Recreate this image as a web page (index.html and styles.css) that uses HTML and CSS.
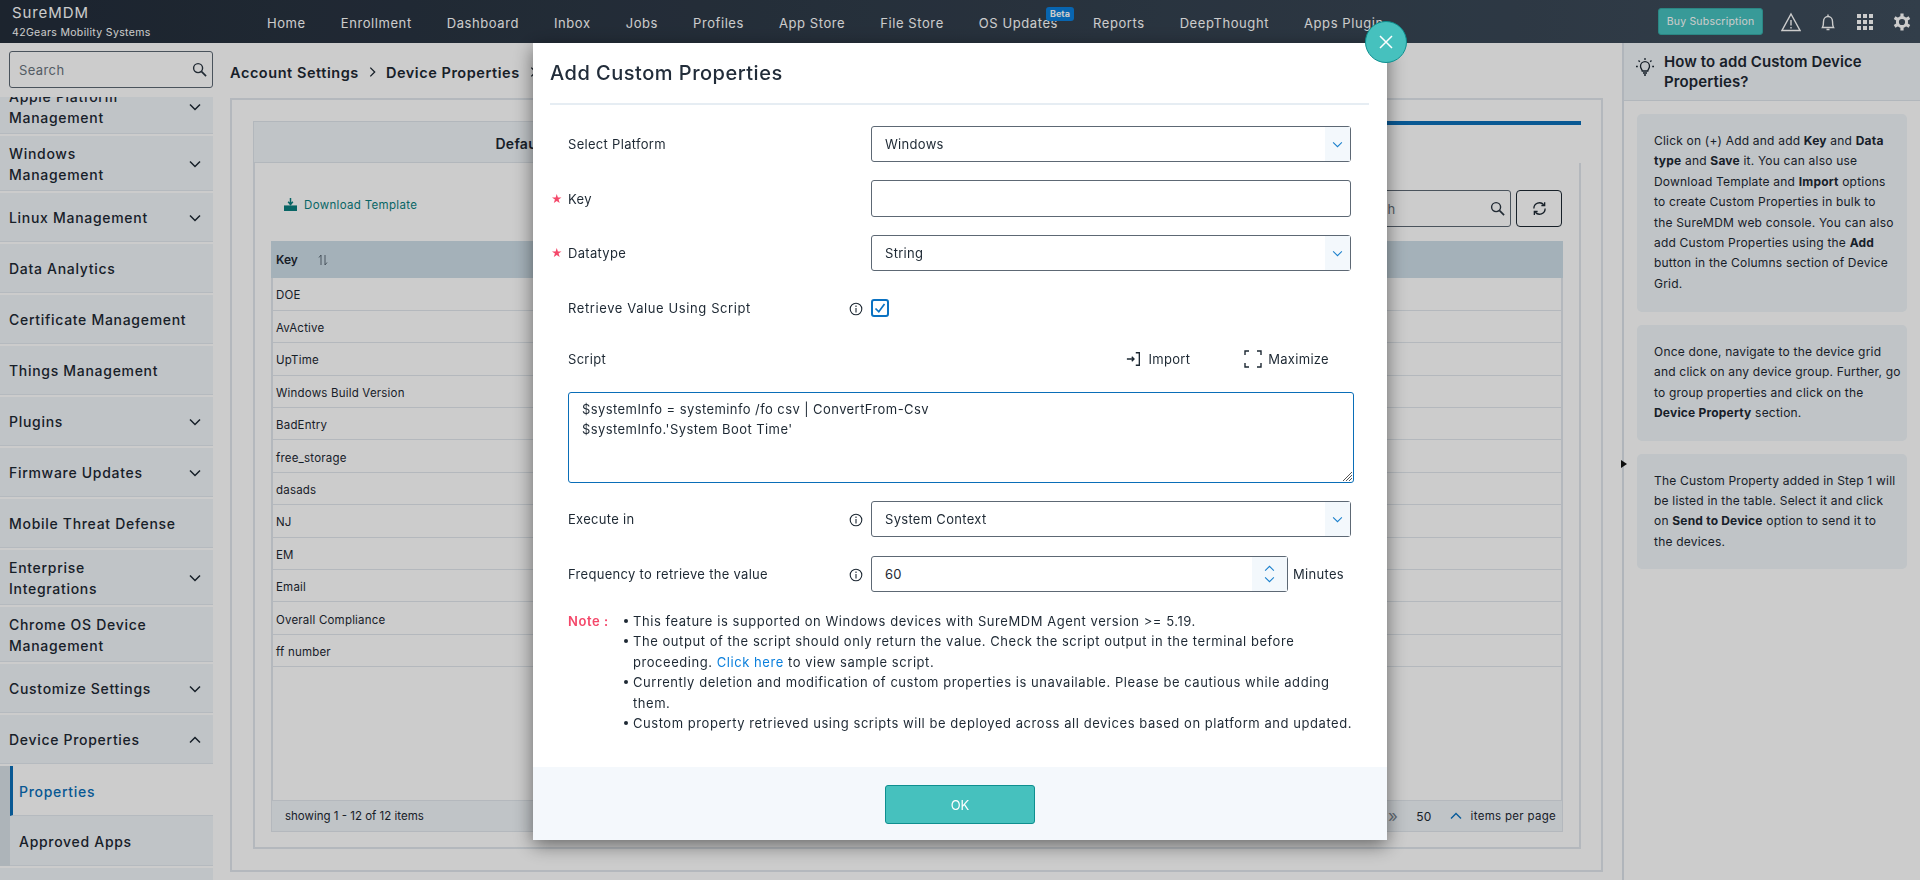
FILE: index.html
```html
<!DOCTYPE html>
<html lang="en">
<head>
    <meta charset="UTF-8">
    <title>SureMDM - Device Properties</title>
    <link rel="stylesheet" href="styles.css">
</head>
<body>
    <header class="topbar">
        <div class="brand">
            <div class="brand-name">SureMDM</div>
            <div class="brand-sub">42Gears Mobility Systems</div>
        </div>
        <nav class="nav">
            <a>Home</a>
            <a>Enrollment</a>
            <a>Dashboard</a>
            <a>Inbox</a>
            <a>Jobs</a>
            <a>Profiles</a>
            <a>App Store</a>
            <a>File Store</a>
            <a class="has-badge">OS Updates<span class="badge">Beta</span></a>
            <a>Reports</a>
            <a>DeepThought</a>
            <a>Apps Plugin</a>
        </nav>
        <div class="top-actions">
            <button class="buy">Buy Subscription</button>
            <svg class="top-icon" viewBox="0 0 20 20"><path d="M10 2 L19 18.5 H1 Z M10 8 V13.5 M10 15 V16.5" fill="none" stroke="#fff" stroke-width="1.4"/></svg>
            <svg class="top-icon" viewBox="0 0 20 20"><path d="M4.5 15.5 C5.5 14 5.5 12 5.5 9.5 C5.5 6.5 7.5 4.5 10 4.5 C12.5 4.5 14.5 6.5 14.5 9.5 C14.5 12 14.5 14 15.5 15.5 Z M10 2.5 V4.5 M8.5 17.5 H11.5" fill="none" stroke="#fff" stroke-width="1.4"/></svg>
            <svg class="top-icon" viewBox="0 0 20 20" fill="#fff"><rect x="2" y="2" width="4" height="4"/><rect x="8" y="2" width="4" height="4"/><rect x="14" y="2" width="4" height="4"/><rect x="2" y="8" width="4" height="4"/><rect x="8" y="8" width="4" height="4"/><rect x="14" y="8" width="4" height="4"/><rect x="2" y="14" width="4" height="4"/><rect x="8" y="14" width="4" height="4"/><rect x="14" y="14" width="4" height="4"/></svg>
            <svg class="top-icon" viewBox="0 0 20 20"><circle cx="10" cy="10" r="4.6" fill="none" stroke="#fff" stroke-width="3"/><path d="M10 1.5 V5 M10 15 V18.5 M2.6 5.7 L5.7 7.5 M14.3 12.5 L17.4 14.3 M2.6 14.3 L5.7 12.5 M14.3 7.5 L17.4 5.7" stroke="#fff" stroke-width="3.2"/></svg>
        </div>
    </header>

    <div class="page">
        <aside class="sidebar">
            <div class="side-search">
                <div class="search-box">
                    <span class="placeholder">Search</span>
                    <svg class="search-icon" viewBox="0 0 16 16"><circle cx="6.5" cy="6.5" r="4.8" fill="none" stroke="#2b3642" stroke-width="1.5"/><path d="M10 10 L15 15" stroke="#2b3642" stroke-width="1.8"/></svg>
                </div>
            </div>
            <div class="menu">
                <div class="menu-item two-line clipped"><span>Apple Platform<br>Management</span><svg class="chev" viewBox="0 0 12 8"><path d="M1 1.5 L6 6.5 L11 1.5"/></svg></div>
                <div class="menu-item two-line"><span>Windows<br>Management</span><svg class="chev" viewBox="0 0 12 8"><path d="M1 1.5 L6 6.5 L11 1.5"/></svg></div>
                <div class="menu-item"><span>Linux Management</span><svg class="chev" viewBox="0 0 12 8"><path d="M1 1.5 L6 6.5 L11 1.5"/></svg></div>
                <div class="menu-item"><span>Data Analytics</span></div>
                <div class="menu-item"><span>Certificate Management</span></div>
                <div class="menu-item"><span>Things Management</span></div>
                <div class="menu-item"><span>Plugins</span><svg class="chev" viewBox="0 0 12 8"><path d="M1 1.5 L6 6.5 L11 1.5"/></svg></div>
                <div class="menu-item"><span>Firmware Updates</span><svg class="chev" viewBox="0 0 12 8"><path d="M1 1.5 L6 6.5 L11 1.5"/></svg></div>
                <div class="menu-item"><span>Mobile Threat Defense</span></div>
                <div class="menu-item two-line"><span>Enterprise<br>Integrations</span><svg class="chev" viewBox="0 0 12 8"><path d="M1 1.5 L6 6.5 L11 1.5"/></svg></div>
                <div class="menu-item two-line"><span>Chrome OS Device<br>Management</span></div>
                <div class="menu-item"><span>Customize Settings</span><svg class="chev" viewBox="0 0 12 8"><path d="M1 1.5 L6 6.5 L11 1.5"/></svg></div>
                <div class="menu-item"><span>Device Properties</span><svg class="chev" viewBox="0 0 12 8"><path d="M1 6.5 L6 1.5 L11 6.5"/></svg></div>
                <div class="submenu">
                    <div class="sub-item active">Properties</div>
                    <div class="sub-item">Approved Apps</div>
                </div>
                <div class="menu-item"></div>
            </div>
        </aside>

        <main class="main">
            <div class="crumbs">
                <span>Account Settings</span>
                <svg class="crumb-sep" viewBox="0 0 8 12"><path d="M1.5 1 L6.5 6 L1.5 11"/></svg>
                <span>Device Properties</span>
                <svg class="crumb-sep" viewBox="0 0 8 12"><path d="M1.5 1 L6.5 6 L1.5 11"/></svg>
            </div>
            <section class="outer">
                <div class="inner">
                    <div class="tabs">
                        <div class="tab">Default Device Properties</div>
                        <div class="tab active">Custom Properties</div>
                    </div>
                    <div class="toolbar">
                        <a class="download">
                            <svg viewBox="0 0 16 14" width="15" height="13"><path d="M8 0 V6 M5.5 4 L8 7 L10.5 4" fill="none" stroke="#0b7f7f" stroke-width="1.6"/><path d="M1 8 H15 V14 H1 Z" fill="#0b7f7f"/></svg>
                            Download Template
                        </a>
                        <div class="tools">
                            <div class="grid-search">
                                <span class="placeholder">Search</span>
                                <svg class="search-icon" viewBox="0 0 16 16"><circle cx="6.5" cy="6.5" r="4.8" fill="none" stroke="#2b3642" stroke-width="1.5"/><path d="M10 10 L15 15" stroke="#2b3642" stroke-width="1.8"/></svg>
                            </div>
                            <button class="refresh"><svg viewBox="0 0 16 16" width="15" height="15"><path d="M2 8 A6 6 0 0 1 12.5 4 M14 8 A6 6 0 0 1 3.5 12" fill="none" stroke="#1d2833" stroke-width="1.4"/><path d="M13.5 1.2 V4.8 H10 M2.5 14.8 V11.2 H6" fill="none" stroke="#1d2833" stroke-width="1.4"/></svg></button>
                        </div>
                    </div>
                    <div class="grid">
                        <table class="grid-table">
                            <thead>
                                <tr><th>Key <svg class="sort" viewBox="0 0 10 12"><path d="M3 11 V1 L1 3.5 M7 1 V11 L9 8.5" fill="none" stroke="#5c6a76" stroke-width="1"/></svg></th></tr>
                            </thead>
                            <tbody>
                                <tr><td>DOE</td></tr>
                                <tr><td>AvActive</td></tr>
                                <tr><td>UpTime</td></tr>
                                <tr><td>Windows Build Version</td></tr>
                                <tr><td>BadEntry</td></tr>
                                <tr><td>free_storage</td></tr>
                                <tr><td>dasads</td></tr>
                                <tr><td>NJ</td></tr>
                                <tr><td>EM</td></tr>
                                <tr><td>Email</td></tr>
                                <tr><td>Overall Compliance</td></tr>
                                <tr><td>ff number</td></tr>
                            </tbody>
                        </table>
                        <div class="grid-fill"></div>
                        <div class="grid-foot">
                            <span>showing 1 - 12 of 12 items</span>
                            <div class="pager">
                                <span class="pg-last">&raquo;</span>
                                <span class="pg-size">50</span>
                                <svg class="pg-up" viewBox="0 0 12 8"><path d="M1 6.5 L6 1.5 L11 6.5"/></svg>
                                <span>items per page</span>
                            </div>
                        </div>
                    </div>
                </div>
            </section>
        </main>

        <aside class="help">
            <div class="help-head">
                <svg class="bulb" viewBox="0 0 20 20"><path d="M7.2 14 C7 12 5.5 11.5 5.5 9.2 A4.5 4.5 0 0 1 14.5 9.2 C14.5 11.5 13 12 12.8 14 Z M8 16 H12 M9 18 H11 M10 1 V3 M3.5 3.5 L4.8 4.8 M16.5 3.5 L15.2 4.8 M1 9.5 H2.8 M17.2 9.5 H19" fill="none" stroke="#1d2833" stroke-width="1.3"/></svg>
                <h2>How to add Custom Device Properties?</h2>
            </div>
            <div class="help-body">
                <div class="help-card h-first">Click on (+) Add and add <b>Key</b> and <b>Data<br>type</b> and <b>Save</b> it. You can also use<br>Download Template and <b>Import</b> options<br>to create Custom Properties in bulk to<br>the SureMDM web console. You can also<br>add Custom Properties using the <b>Add</b><br>button in the Columns section of Device<br>Grid.</div>
                <div class="help-card">Once done, navigate to the device grid<br>and click on any device group. Further, go<br>to group properties and click on the<br><b>Device Property</b> section.</div>
                <div class="help-card">The Custom Property added in Step 1 will<br>be listed in the table. Select it and click<br>on <b>Send to Device</b> option to send it to<br>the devices.</div>
            </div>
            <span class="help-toggle"></span>
        </aside>
    </div>

    <div class="overlay"></div>

    <div class="modal">
        <button class="modal-close"><svg viewBox="0 0 16 16" width="16" height="16"><path d="M2 2 L14 14 M14 2 L2 14" stroke="#fff" stroke-width="1.5"/></svg></button>
        <h1 class="modal-title">Add Custom Properties</h1>
        <div class="modal-body">
            <div class="form-row">
                <label>Select Platform</label>
                <div class="select">Windows<span class="select-btn"><svg class="blue-chev" viewBox="0 0 12 8"><path d="M1 1.5 L6 6.5 L11 1.5"/></svg></span></div>
            </div>
            <div class="form-row key-row">
                <label class="req">Key</label>
                <div class="input"></div>
            </div>
            <div class="form-row">
                <label class="req">Datatype</label>
                <div class="select">String<span class="select-btn"><svg class="blue-chev" viewBox="0 0 12 8"><path d="M1 1.5 L6 6.5 L11 1.5"/></svg></span></div>
            </div>
            <div class="form-row check-row">
                <label>Retrieve Value Using Script<svg class="info" viewBox="0 0 14 14"><circle cx="7" cy="7" r="5.8"/><path d="M7 6 V10.5 M7 3.5 V5"/></svg></label>
                <span class="checkbox"><svg viewBox="0 0 14 14" width="14" height="14"><path d="M2.5 7.5 L5.8 10.8 L11.5 3" fill="none" stroke="#0a72c2" stroke-width="1.7"/></svg></span>
            </div>
            <div class="script-row">
                <span>Script</span>
                <div class="script-actions">
                    <a><svg viewBox="0 0 18 18" width="16" height="18"><path d="M1 9 H9 M6.5 6.5 L9 9 L6.5 11.5 M11 2 H15 V16 H11" fill="none" stroke="#1d2833" stroke-width="1.5"/></svg>Import</a>
                    <a class="maximize"><svg viewBox="0 0 18 18" width="18" height="18"><path d="M1 5 V1 H5 M13 1 H17 V5 M1 13 V17 H5 M13 17 H17 V13" fill="none" stroke="#1d2833" stroke-width="1.4"/></svg>Maximize</a>
                </div>
            </div>
            <div class="script-box">
                <div>$systemInfo = systeminfo /fo csv | ConvertFrom-Csv</div>
                <div>$systemInfo.'System Boot Time'</div>
                <svg class="resize" viewBox="0 0 10 10"><path d="M1 10 L10 1 M4 10 L10 4 M7 10 L10 7" stroke="#555" stroke-width="1"/></svg>
            </div>
            <div class="form-row exec-row">
                <label>Execute in<svg class="info" viewBox="0 0 14 14"><circle cx="7" cy="7" r="5.8"/><path d="M7 6 V10.5 M7 3.5 V5"/></svg></label>
                <div class="select">System Context<span class="select-btn"><svg class="blue-chev" viewBox="0 0 12 8"><path d="M1 1.5 L6 6.5 L11 1.5"/></svg></span></div>
            </div>
            <div class="form-row">
                <label>Frequency to retrieve the value<svg class="info" viewBox="0 0 14 14"><circle cx="7" cy="7" r="5.8"/><path d="M7 6 V10.5 M7 3.5 V5"/></svg></label>
                <div class="freq">
                    <div class="select number">60<span class="select-btn spin"><svg class="blue-chev" viewBox="0 0 12 8"><path d="M1 6.5 L6 1.5 L11 6.5"/></svg><svg class="blue-chev" viewBox="0 0 12 8"><path d="M1 1.5 L6 6.5 L11 1.5"/></svg></span></div>
                    <span class="unit">Minutes</span>
                </div>
            </div>
            <div class="note">
                <strong>Note :</strong>
                <ul>
                    <li>This feature is supported on Windows devices with SureMDM Agent version &gt;= 5.19.</li>
                    <li>The output of the script should only return the value. Check the script output in the terminal before proceeding. <a>Click here</a> to view sample script.</li>
                    <li>Currently deletion and modification of custom properties is unavailable. Please be cautious while adding them.</li>
                    <li>Custom property retrieved using scripts will be deployed across all devices based on platform and updated.</li>
                </ul>
            </div>
        </div>
        <div class="modal-foot">
            <button class="ok">OK</button>
        </div>
    </div>
</body>
</html>
```

FILE: styles.css
```css
* {
    box-sizing: border-box;
}
html, body {
    margin: 0;
    height: 880px;
    overflow: hidden;
}
body {
    font-family: Inter, "Noto Sans", sans-serif;
    font-size: 13px;
    color: #1d2833;
    background-color: #fff;
    display: flex;
    flex-direction: column;
}
button {
    font-family: inherit;
}

/* top bar */
.topbar {
    height: 43px;
    flex: none;
    display: flex;
    background: linear-gradient(90deg, #232d3a, #3f4e5d);
    color: #fff;
}
.brand {
    width: 267px;
    padding: 3px 0 0 12px;
    flex: none;
}
.brand-name {
    font-size: 15px;
    line-height: 19px;
    letter-spacing: .9px;
}
.brand-sub {
    font-size: 10.5px;
    line-height: 16px;
    margin-top: 3px;
    letter-spacing: .35px;
}
.nav {
    display: flex;
    gap: 35px;
    font-size: 13px;
    line-height: 46px;
    letter-spacing: .58px;
    white-space: nowrap;
    flex: 1;
    overflow: hidden;
}
.has-badge {
    position: relative;
}
.badge {
    position: absolute;
    top: 7px;
    right: -16px;
    width: 28px;
    height: 14px;
    text-align: center;
    font-size: 9px;
    line-height: 14px;
    font-weight: 700;
    letter-spacing: 0;
    background-color: #0a7fdc;
    border-radius: 3px;
}
.top-actions {
    width: 262px;
    flex: none;
    display: flex;
    align-items: center;
}
.buy {
    width: 105px;
    height: 27px;
    flex: none;
    margin-right: 18px;
    padding: 0;
    font-size: 10.5px;
    letter-spacing: .2px;
    color: #fff;
    background-color: #46c1be;
    border: 1px solid #35a9a6;
    border-radius: 3px;
}
.top-icon {
    width: 20px;
    height: 20px;
    flex: none;
    margin-right: 17px;
}
.top-icon:last-child {
    margin-right: 0;
}

/* layout */
.page {
    flex: 1;
    display: flex;
    min-height: 0;
}
.sidebar {
    width: 213px;
    flex: none;
    display: flex;
    flex-direction: column;
    overflow: hidden;
}
.side-search {
    height: 54px;
    flex: none;
    padding: 8px 0 0 9px;
}
.search-box {
    height: 37px;
    border: 1px solid #5d6874;
    border-radius: 3px;
    display: flex;
    align-items: center;
    justify-content: space-between;
    padding: 0 5px 0 9px;
}
.placeholder {
    color: #69737d;
    font-size: 13px;
    letter-spacing: .4px;
}
.search-icon {
    width: 15px;
    height: 15px;
}
.menu {
    flex: 1;
    min-height: 0;
    overflow: hidden;
}
.menu-item {
    height: 49px;
    margin-bottom: 2px;
    padding: 1px 12px 0 9px;
    display: flex;
    align-items: center;
    justify-content: space-between;
    font-size: 14px;
    font-weight: 500;
    line-height: 21px;
    letter-spacing: .7px;
    white-space: nowrap;
    background-color: #f0f5f9;
    border-bottom: 1px solid #e3e9ef;
}
.two-line {
    height: 55px;
}
.clipped {
    margin-top: -18px;
}
.chev {
    width: 12px;
    height: 8px;
    fill: none;
    stroke: #1d2833;
    stroke-width: 1.5;
}
.submenu {
    margin: 0 0 2px;
    padding-left: 10px;
    background-color: #d9e1e8;
}
.sub-item {
    height: 50px;
    padding: 2px 0 0 9px;
    display: flex;
    align-items: center;
    font-size: 14px;
    font-weight: 500;
    letter-spacing: .7px;
    background-color: #f0f5f9;
    border-bottom: 1px solid #e3e9ef;
}
.sub-item.active {
    color: #0a6eb8;
    background-color: #fff;
    border-left: 3px solid #0a6eb8;
    padding-left: 6px;
}

/* main column */
.main {
    flex: 1;
    min-width: 0;
    padding-left: 17px;
    display: flex;
    flex-direction: column;
}
.crumbs {
    height: 55px;
    flex: none;
    display: flex;
    align-items: center;
    font-size: 14.5px;
    font-weight: 600;
    letter-spacing: .55px;
    padding-top: 3px;
}
.crumb-sep {
    width: 7px;
    height: 12px;
    margin: 0 10px;
    fill: none;
    stroke: #1d2833;
    stroke-width: 1.5;
}
.outer {
    height: 774px;
    margin-right: 19px;
    padding: 21px 20px 21px 21px;
    border: 2px solid #e1e7ed;
}
.inner {
    height: 728px;
    border: 2px solid #e1e7ed;
    border-top: 0;
    display: flex;
    flex-direction: column;
    padding-bottom: 15px;
}
.tabs {
    display: flex;
    height: 42px;
    margin: 0 -2px;
    flex: none;
}
.tab {
    flex: 1;
    text-align: center;
    font-weight: 600;
    font-size: 14px;
    line-height: 44px;
    letter-spacing: .3px;
    background-color: #f0f5f9;
    border: 1px solid #dfe5eb;
}
.tab.active {
    background-color: #fff;
    border: 0;
    border-top: 4px solid #0a6eb8;
    color: #0a6eb8;
}
.toolbar {
    height: 78px;
    flex: none;
    margin: 0 16px;
    display: flex;
    justify-content: space-between;
    padding-top: 27px;
}
.download {
    display: flex;
    align-items: flex-start;
    gap: 6px;
    padding: 8px 0 0 12px;
    font-size: 11.5px;
    color: #0b7f7f;
    letter-spacing: .33px;
}
.tools {
    display: flex;
    gap: 5px;
    height: 37px;
    margin-right: 1px;
}
.grid-search {
    width: 171px;
    height: 37px;
    border: 1px solid #5d6874;
    border-radius: 3px;
    display: flex;
    align-items: center;
    justify-content: space-between;
    padding: 0 5px 0 9px;
}
.refresh {
    width: 46px;
    height: 37px;
    padding: 0;
    background: none;
    border: 1.5px solid #1d2833;
    border-radius: 4px;
    display: flex;
    align-items: center;
    justify-content: center;
}
.grid {
    flex: 1;
    margin: 0 16px;
    display: flex;
    flex-direction: column;
    box-shadow: inset 2px 0 #e1e7ed, inset -2px 0 #e1e7ed;
}
.grid-table {
    border-collapse: collapse;
    width: 100%;
    flex: none;
}
.grid-table th {
    height: 37px;
    text-align: left;
    padding-left: 5px;
    font-size: 12px;
    font-weight: 600;
    background-color: #cedee8;
}
.sort {
    width: 10px;
    height: 12px;
    margin-left: 17px;
    vertical-align: -2px;
}
.grid-table td {
    height: 32.4px;
    padding: 3px 0 0 5px;
    font-size: 11.5px;
    letter-spacing: .2px;
    border-bottom: 1.5px solid #e1e7ed;
}
.grid-fill {
    flex: 1;
}
.grid-foot {
    height: 32px;
    flex: none;
    padding: 0 6px 0 13px;
    display: flex;
    align-items: center;
    justify-content: space-between;
    font-size: 11.5px;
    background-color: #f0f5f9;
    border: 1.5px solid #e1e7ed;
}
.pager {
    display: flex;
    align-items: center;
    letter-spacing: .3px;
}
.pg-last {
    color: #7c8792;
    font-size: 17px;
    line-height: 17px;
    margin-right: 18px;
}
.pg-size {
    font-size: 12px;
    margin-right: 18px;
}
.pg-up {
    width: 12px;
    height: 8px;
    margin-right: 9px;
    fill: none;
    stroke: #0a72c2;
    stroke-width: 1.4;
}

/* help panel */
.help {
    width: 298px;
    flex: none;
    position: relative;
    border-left: 2px solid #dce3ea;
}
.help-head {
    height: 58px;
    padding: 9px 10px 0 11px;
    display: flex;
    gap: 9px;
    background-color: #f0f5f9;
    border-bottom: 1px solid #dfe5eb;
}
.bulb {
    width: 20px;
    height: 20px;
    margin-top: 5px;
    flex: none;
}
.help-head h2 {
    margin: 0;
    font-size: 15px;
    font-weight: 600;
    line-height: 20px;
    letter-spacing: .1px;
}
.help-body {
    padding: 13px 13px 0 13px;
}
.help-card {
    padding: 17px 4px 17px 17px;
    margin-bottom: 13px;
    font-size: 12px;
    line-height: 20.4px;
    letter-spacing: .2px;
    white-space: nowrap;
    background-color: #f0f5f9;
    border-radius: 5px;
}
.h-first {
    height: 198px;
}
.help-toggle {
    position: absolute;
    left: -3px;
    top: 417px;
    border-left: 6px solid #111;
    border-top: 4px solid transparent;
    border-bottom: 4px solid transparent;
}

/* dialog */
.overlay {
    position: fixed;
    inset: 0;
    background-color: rgba(0,0,0,.2);
}
.modal {
    position: fixed;
    left: 533px;
    top: 43px;
    width: 854px;
    height: 797px;
    background-color: #fff;
    box-shadow: 0 5px 18px rgba(0,0,0,.5);
    display: flex;
    flex-direction: column;
}
.modal-close {
    position: absolute;
    right: -20px;
    top: -22px;
    width: 42px;
    height: 42px;
    padding: 0;
    border-radius: 50%;
    background-color: #46c1be;
    border: 1.5px solid #0e8f8f;
    display: flex;
    align-items: center;
    justify-content: center;
}
.modal-title {
    margin: 0 18px 0 17px;
    height: 62px;
    flex: none;
    padding-top: 16px;
    font-size: 20px;
    font-weight: 500;
    line-height: 29px;
    letter-spacing: .5px;
    color: #222d3a;
    border-bottom: 2px solid #e6edf3;
}
.modal-body {
    flex: 1;
    padding: 21px 34px 0 35px;
    letter-spacing: .3px;
}
.form-row {
    display: flex;
    align-items: center;
    height: 36px;
    margin-bottom: 18px;
}
.key-row, .key-row .input {
    height: 37px;
}
.exec-row {
    margin-bottom: 19px;
}
.form-row > label {
    width: 303px;
    flex: none;
    position: relative;
    display: block;
}
.req::before {
    content: "\2605";
    color: #f4486a;
    font-size: 11px;
    position: absolute;
    left: -17px;
    top: 1px;
}
.info {
    position: absolute;
    right: 8px;
    top: 2px;
    width: 14px;
    height: 14px;
    fill: none;
    stroke: #1d2833;
    stroke-width: 1.1;
}
.select, .input {
    width: 480px;
    height: 36px;
    padding-left: 13px;
    display: flex;
    align-items: center;
    justify-content: space-between;
    border: 1px solid #5d6874;
    border-radius: 3px;
    background-color: #fff;
}
.select-btn {
    width: 25px;
    height: 34px;
    background-color: #f3f8fc;
    display: flex;
    flex-direction: column;
    gap: 4px;
    align-items: center;
    justify-content: center;
}
.blue-chev {
    width: 11px;
    height: 7px;
    fill: none;
    stroke: #1a7fcc;
    stroke-width: 1.2;
}
.spin {
    width: 35px;
}
.freq {
    display: flex;
    align-items: center;
}
.number {
    width: 417px;
}
.unit {
    margin-left: 5px;
}
.check-row {
    height: 18px;
    margin: 28px 0 33px;
    letter-spacing: .6px;
}
.checkbox {
    width: 18px;
    height: 18px;
    border: 2px solid #0a72c2;
    border-radius: 3px;
    display: flex;
    align-items: center;
    justify-content: center;
}
.script-row {
    display: flex;
    justify-content: space-between;
    align-items: center;
    height: 18px;
    margin-bottom: 24px;
}
.script-actions {
    display: flex;
    gap: 54px;
    padding-right: 24px;
}
.script-actions a {
    display: flex;
    align-items: center;
    gap: 6px;
}
.maximize {
    gap: 5px;
}
.script-box {
    position: relative;
    width: 786px;
    height: 91px;
    margin-bottom: 18px;
    padding: 6px 13px;
    line-height: 20px;
    letter-spacing: .42px;
    border: 1px solid #0a6eb8;
    border-radius: 3px;
}
.resize {
    position: absolute;
    right: 1px;
    bottom: 1px;
    width: 10px;
    height: 10px;
}
.note {
    display: flex;
    margin-top: 19px;
    line-height: 20.4px;
    letter-spacing: .55px;
    width: 800px;
}
.note strong {
    width: 55px;
    flex: none;
    color: #f4486a;
    font-weight: 600;
}
.note ul {
    margin: 0;
    padding: 0 0 0 10px;
    list-style: none;
}
.note li {
    position: relative;
    padding-left: 0;
    width: 724px;
}
.note li::before {
    content: "";
    position: absolute;
    left: -9px;
    top: 8px;
    width: 4px;
    height: 4px;
    background-color: #1d2833;
    border-radius: 50%;
}
.note a {
    color: #0a7fdc;
}
.modal-foot {
    height: 73px;
    flex: none;
    display: flex;
    align-items: flex-start;
    justify-content: center;
    padding-top: 18px;
    background-color: #f4f8fc;
}
.ok {
    width: 150px;
    height: 39px;
    color: #fff;
    font-size: 13px;
    background-color: #46c1be;
    border: 1.5px solid #0e8f8f;
    border-radius: 3px;
}
```
